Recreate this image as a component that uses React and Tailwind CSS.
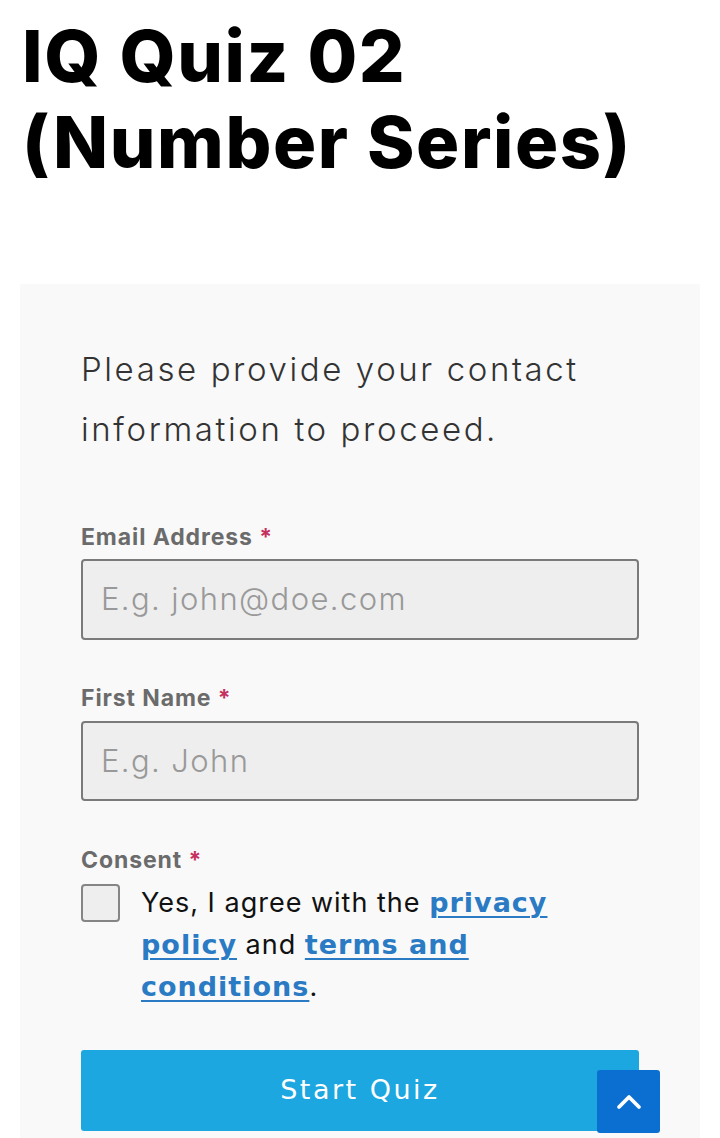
import React from "react";

export default function App() {
  const link = "font-bold text-[#2a7bc4] underline underline-offset-[4px] decoration-[2px] tracking-[1px]";
  const linkFont = { fontFamily: "'DejaVu Sans', sans-serif" };
  const label = "block text-[23px] leading-[28px] font-bold text-[#6b6b6b] tracking-[0.9px]";
  return (
    <div className="relative w-[720px] h-[1138px] overflow-hidden bg-white" style={{ fontFamily: "Inter, 'Noto Sans', sans-serif" }}>
      <h1 className="pl-[22px] pt-[13px] text-[72px] leading-[86px] font-extrabold text-black tracking-[1.6px]">
        IQ Quiz 02
        <br />
        (Number Series)
      </h1>
      <div className="mx-[20px] mt-[99px] bg-[#f9f9f9] px-[61px] pt-[55px] pb-[40px]">
        <p className="text-[33px] leading-[60px] font-light text-[#333] tracking-[2.6px]">
          Please provide your contact
          <br />
          information to proceed.
        </p>
        <div className="mt-[64px]">
          <label className={label}>
            Email Address <span className="text-[#c5305e]">*</span>
          </label>
          <div className="mt-[8px] h-[81px] rounded-[4px] border-2 border-[#7a7a7a] bg-[#eeeeee] flex items-center px-[18px]">
            <span className="text-[31px] font-light text-[#999] tracking-[1.4px]">E.g. john@doe.com</span>
          </div>
        </div>
        <div className="mt-[44px]">
          <label className={label}>
            First Name <span className="text-[#c5305e]">*</span>
          </label>
          <div className="mt-[9px] h-[80px] rounded-[4px] border-2 border-[#7a7a7a] bg-[#eeeeee] flex items-center px-[18px]">
            <span className="text-[31px] font-light text-[#999] tracking-[1.4px]">E.g. John</span>
          </div>
        </div>
        <div className="mt-[45px]">
          <label className={label}>
            Consent <span className="text-[#c5305e]">*</span>
          </label>
          <div className="mt-[9px] flex items-start gap-[21px]">
            <div className="mt-[1px] w-[39px] h-[38px] shrink-0 rounded-[4px] border-2 border-[#858585] bg-[#eeeeee]" />
            <p className="text-[27px] leading-[42px] text-[#111] -mt-[1px] tracking-[1px]">
              Yes, I agree with the{" "}
              <a className={link} style={linkFont}>privacy</a>
              <br />
              <a className={link} style={linkFont}>policy</a> and{" "}
              <a className={link} style={linkFont}>terms and</a>
              <br />
              <a className={link} style={linkFont}>conditions</a>.
            </p>
          </div>
        </div>
        <button className="mt-[42px] w-full h-[81px] rounded-[3px] bg-[#1ca7e0] text-white text-[27px] tracking-[2.5px]" style={{ fontFamily: "'DejaVu Sans', sans-serif" }}>
          Start Quiz
        </button>
      </div>
      <div className="absolute left-[597px] top-[1070px] w-[63px] h-[63px] rounded-[3px] bg-[#0b6fd2] flex items-center justify-center">
        <svg width="30" height="30" viewBox="0 0 24 24" fill="none" stroke="white" strokeWidth="3" strokeLinecap="round" strokeLinejoin="round">
          <path d="M4 16 L12 8 L20 16" />
        </svg>
      </div>
    </div>
  );
}
